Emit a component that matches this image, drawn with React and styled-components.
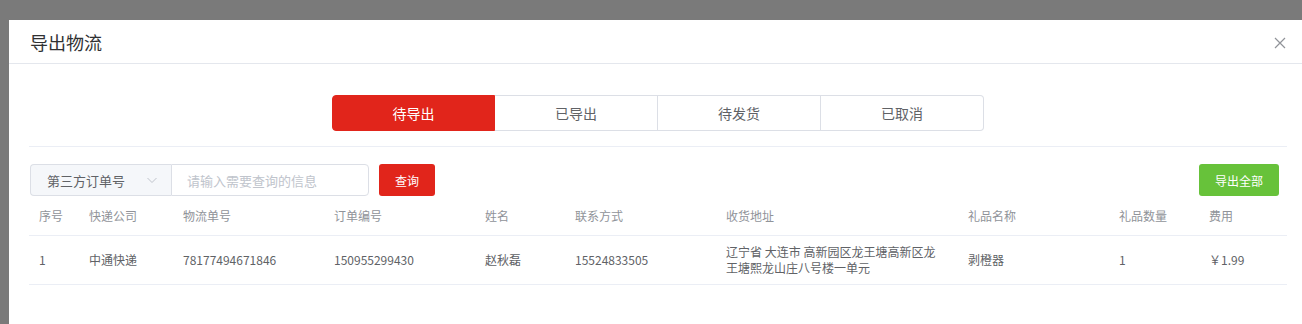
import React from 'react';
import styled, { createGlobalStyle } from 'styled-components';

const GlobalStyle = createGlobalStyle`
  html, body {
    margin: 0;
    padding: 0;
    background: #7a7a7a;
    overflow: hidden;
    font-family: "Noto Sans CJK SC", "Noto Sans", sans-serif;
  }
`;

const tabs = ['待导出', '已导出', '待发货', '已取消'];

const columns = [
  { title: '序号', width: 50 },
  { title: '快递公司', width: 94 },
  { title: '物流单号', width: 151 },
  { title: '订单编号', width: 151 },
  { title: '姓名', width: 90 },
  { title: '联系方式', width: 151 },
  { title: '收货地址', width: 242, wide: true },
  { title: '礼品名称', width: 151 },
  { title: '礼品数量', width: 90 },
  { title: '费用', width: 88 },
];

const rows = [
  ['1', '中通快递', '78177494671846', '150955299430', '赵秋磊', '15524833505',
    '辽宁省 大连市 高新园区龙王塘高新区龙王塘熙龙山庄八号楼一单元', '剥橙器', '1', '￥1.99'],
];

const App = () => {
  return (
    <Page>
      <GlobalStyle />
      <Dialog>
        <Header>
          <Title>导出物流</Title>
          <Close aria-label="close">
            <svg width="12" height="12" viewBox="0 0 12 12">
              <path d="M1 1L11 11M11 1L1 11" stroke="#909399" strokeWidth="1.2" fill="none" />
            </svg>
          </Close>
        </Header>
        <Body>
          <TabBar>
            <TabGroup>
              {tabs.map((t, i) => (
                <Tab key={t} active={i === 0}>{t}</Tab>
              ))}
            </TabGroup>
          </TabBar>
          <Toolbar>
            <Search>
              <Select>
                <span>第三方订单号</span>
                <svg width="12" height="12" viewBox="0 0 12 12">
                  <path d="M1.5 4L6 8.5L10.5 4" stroke="#c0c4cc" strokeWidth="1" fill="none" />
                </svg>
              </Select>
              <Input placeholder="请输入需要查询的信息" />
              <Button color="#e1251b">查询</Button>
            </Search>
            <Button color="#67c23a">导出全部</Button>
          </Toolbar>
          <Table>
            <colgroup>
              {columns.map(c => <col key={c.title} style={{ width: c.width }} />)}
            </colgroup>
            <thead>
              <tr>
                {columns.map(c => <Th key={c.title}>{c.title}</Th>)}
              </tr>
            </thead>
            <tbody>
              {rows.map((r, i) => (
                <tr key={i}>
                  {r.map((v, j) => <Td key={j} wide={columns[j].wide}>{v}</Td>)}
                </tr>
              ))}
            </tbody>
          </Table>
        </Body>
      </Dialog>
    </Page>
  );
};

const Page = styled.div`
  padding: 20px 0 0 9px;
  height: 324px;
  box-sizing: border-box;
`;

const Dialog = styled.div`
  width: 1298px;
  height: 400px;
  background: #fff;
`;

const Header = styled.div`
  height: 43px;
  display: flex;
  align-items: center;
  justify-content: space-between;
  padding: 0 20px 0 21px;
  border-bottom: 1px solid #e4e7ed;
`;

const Title = styled.span`
  font-size: 18px;
  color: #303133;
  line-height: 24px;
`;

const Close = styled.span`
  display: flex;
  margin-right: 1px;
  margin-top: 2px;
`;

const Body = styled.div`
  padding: 31px 20px 0 20px;
`;

const TabBar = styled.div`
  display: flex;
  justify-content: center;
  padding-bottom: 15px;
  border-bottom: 1px solid #ebeef5;
`;

const TabGroup = styled.div`
  display: flex;
`;

const Tab = styled.div`
  width: 163px;
  height: 36px;
  box-sizing: border-box;
  display: flex;
  align-items: center;
  justify-content: center;
  font-size: 14px;
  color: ${({ active }) => (active ? '#fff' : '#606266')};
  background: ${({ active }) => (active ? '#e1251b' : '#fff')};
  border: 1px solid ${({ active }) => (active ? '#e1251b' : '#dcdfe6')};
  border-left: ${({ active }) => (active ? '1px solid #e1251b' : 'none')};
  &:first-child { border-radius: 4px 0 0 4px; }
  &:last-child { border-radius: 0 4px 4px 0; }
`;

const Toolbar = styled.div`
  display: flex;
  justify-content: space-between;
  align-items: center;
  margin-top: 17px;
  padding-right: 8px;
`;

const Search = styled.div`
  display: flex;
  align-items: center;
  padding-left: 1px;
`;

const Select = styled.div`
  width: 141px;
  height: 32px;
  box-sizing: border-box;
  border: 1px solid #dcdfe6;
  border-right: none;
  border-radius: 4px 0 0 4px;
  background: #f5f7fa;
  display: flex;
  align-items: center;
  justify-content: space-between;
  padding: 0 13px 0 16px;
  font-size: 13px;
  color: #606266;
`;

const Input = styled.input`
  width: 198px;
  height: 32px;
  box-sizing: border-box;
  border: 1px solid #dcdfe6;
  border-radius: 0 4px 4px 0;
  padding: 0 15px;
  font-size: 13px;
  font-family: inherit;
  outline: none;
  &::placeholder { color: #c0c4cc; }
`;

const Button = styled.button`
  height: 32px;
  padding: 0 16px;
  margin-left: 10px;
  border: none;
  border-radius: 3px;
  background: ${({ color }) => color};
  color: #fff;
  font-size: 12px;
  font-family: inherit;
`;

const Table = styled.table`
  width: 1258px;
  table-layout: fixed;
  border-collapse: collapse;
  font-size: 12px;
`;

const Th = styled.th`
  height: 39px;
  padding: 0 10px;
  text-align: left;
  font-weight: normal;
  color: #909399;
  border-bottom: 1px solid #ebeef5;
`;

const Td = styled.td`
  height: 48px;
  box-sizing: border-box;
  padding: 8px ${({ wide }) => (wide ? '22px' : '10px')} 8px 10px;
  line-height: 16px;
  color: #606266;
  border-bottom: 1px solid #ebeef5;
`;

export default App;
